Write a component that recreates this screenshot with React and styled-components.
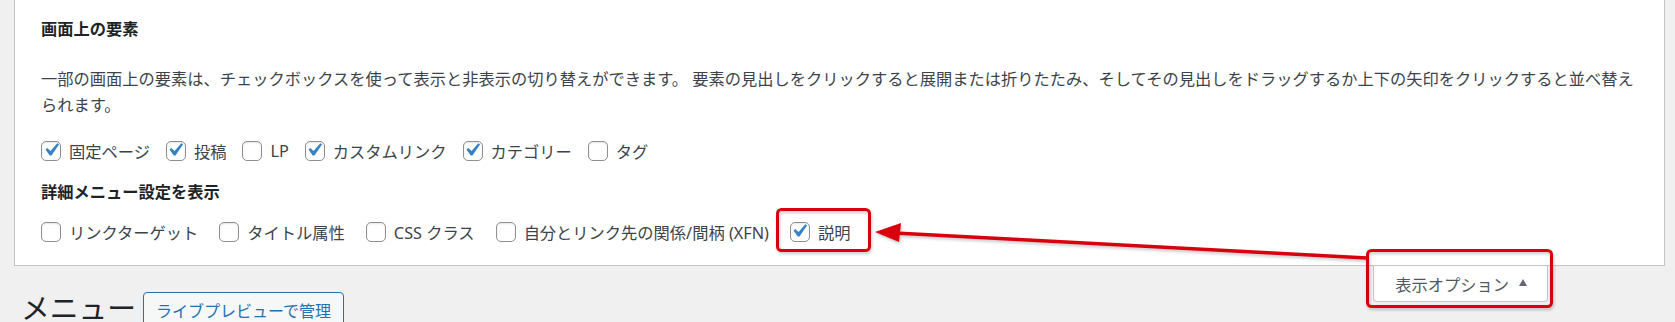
import React from "react";
import styled, { createGlobalStyle } from "styled-components";

const GlobalStyle = createGlobalStyle`
  html, body {
    margin: 0;
    padding: 0;
    background: #f0f0f1;
    overflow: hidden;
  }
  body {
    font-family: "Noto Sans", "Noto Sans CJK JP", sans-serif;
    color: #3c434a;
  }
`;

const Page = styled.div`
  position: relative;
  width: 1675px;
  height: 322px;
  background: #f0f0f1;
  overflow: hidden;
`;

const Panel = styled.div`
  margin: 0 10px 0 14px;
  padding: 17px 25px 14px 26px;
  background: #fff;
  border: 1px solid #c3c4c7;
  border-top: none;
`;

const Legend = styled.div`
  font-size: 16.25px;
  line-height: 24px;
  font-weight: 700;
  color: #1d2327;
`;

const Description = styled.p`
  margin: 26px 0 14px;
  font-size: 16.25px;
  line-height: 25.5px;
  color: #3c434a;
`;

const SubLegend = styled(Legend)`
  margin-top: 10px;
`;

const Row = styled.div`
  display: flex;
  align-items: center;
  height: 38px;
  margin-top: ${(p) => p.$offset || 0}px;
`;

const Label = styled.label`
  display: inline-flex;
  align-items: center;
  gap: 8px;
  margin-right: ${(p) => p.$spread}px;
  font-size: 16.25px;
  color: #3c434a;
  white-space: nowrap;
`;

const Box = styled.span`
  position: relative;
  display: inline-block;
  width: 20px;
  height: 20px;
  box-sizing: border-box;
  border: 1px solid #8c8f94;
  border-radius: 5px;
  background: #fff;
  box-shadow: inset 0 1px 2px rgba(0, 0, 0, 0.1);

  svg {
    position: absolute;
    left: -4.5px;
    top: -5px;
    width: 26px;
    height: 26px;
  }
`;

const BottomBar = styled.div`
  display: flex;
  justify-content: space-between;
  align-items: flex-start;
  padding: 0 127px 0 21px;
`;

const TitleWrap = styled.div`
  display: flex;
  align-items: center;
  gap: 7px;
  margin-top: 26px;
`;

const Title = styled.h1`
  margin: -4px 0 0;
  font-size: 28.75px;
  font-weight: 400;
  line-height: 36px;
  color: #1d2327;
`;

const ActionButton = styled.a`
  display: inline-flex;
  align-items: center;
  height: 36px;
  box-sizing: border-box;
  padding: 0 12px;
  border: 1px solid #2271b1;
  border-radius: 4px;
  background: #f6f7f7;
  color: #2271b1;
  font-size: 16px;
  text-decoration: none;
`;

const ScreenTab = styled.button`
  display: inline-flex;
  align-items: center;
  gap: 10px;
  height: 36px;
  box-sizing: border-box;
  padding: 0 20px 0 21px;
  margin: 0;
  border: 1px solid #c3c4c7;
  border-top: none;
  border-radius: 0 0 4px 4px;
  background: #fff;
  color: #50575e;
  font-family: inherit;
  font-size: 16.25px;
`;

const Caret = styled.span`
  width: 0;
  height: 0;
  border-left: 4.5px solid transparent;
  border-right: 4.5px solid transparent;
  border-bottom: 7px solid #646970;
  margin-top: -2px;
`;

const Annotation = styled.svg`
  position: absolute;
  left: 0;
  top: 0;
  pointer-events: none;
  filter: drop-shadow(1px 2px 1.5px rgba(0, 0, 0, 0.22));
`;

function Check({ on }) {
  return (
    <Box>
      {on && (
        <svg viewBox="0 0 20 20">
          <path
            d="M14.83 4.89l1.34.94-5.81 8.38H9.02L5.78 9.67l1.34-1.25 2.57 2.4z"
            fill="#3582c4"
          />
        </svg>
      )}
    </Box>
  );
}

const boxes = [
  { label: "固定ページ", on: true },
  { label: "投稿", on: true },
  { label: "LP", on: false },
  { label: "カスタムリンク", on: true },
  { label: "カテゴリー", on: true },
  { label: "タグ", on: false },
];

const advanced = [
  { label: "リンクターゲット", on: false },
  { label: "タイトル属性", on: false },
  { label: "CSS クラス", on: false },
  { label: "自分とリンク先の関係/間柄 (XFN)", on: false },
  { label: "説明", on: true },
];

export default function App() {
  return (
    <>
      <GlobalStyle />
      <Page>
        <Panel>
          <Legend>画面上の要素</Legend>
          <Description>
            一部の画面上の要素は、チェックボックスを使って表示と非表示の切り替えができます。
            要素の見出しをクリックすると展開または折りたたみ、そしてその見出しをドラッグするか上下の矢印をクリックすると並べ替え
            <br />
            られます。
          </Description>
          <Row>
            {boxes.map((b) => (
              <Label key={b.label} $spread={16}>
                <Check on={b.on} />
                {b.label}
              </Label>
            ))}
          </Row>
          <SubLegend>詳細メニュー設定を表示</SubLegend>
          <Row $offset={9}>
            {advanced.map((b) => (
              <Label key={b.label} $spread={21}>
                <Check on={b.on} />
                {b.label}
              </Label>
            ))}
          </Row>
        </Panel>
        <BottomBar>
          <TitleWrap>
            <Title>メニュー</Title>
            <ActionButton href="#">ライブプレビューで管理</ActionButton>
          </TitleWrap>
          <ScreenTab>
            表示オプション
            <Caret />
          </ScreenTab>
        </BottomBar>

        <Annotation width="1675" height="322" viewBox="0 0 1675 322">
          <rect x="777.5" y="209.5" width="92" height="41" rx="4" fill="none" stroke="#d9000d" strokeWidth="3" />
          <rect x="1367.5" y="250.5" width="184" height="56" rx="4" fill="none" stroke="#d9000d" strokeWidth="3" />
          <line x1="1367" y1="258" x2="895" y2="233" stroke="#d9000d" strokeWidth="3.5" />
          <polygon points="875,232 901,223 899,242" fill="#d9000d" />
        </Annotation>
      </Page>
    </>
  );
}
